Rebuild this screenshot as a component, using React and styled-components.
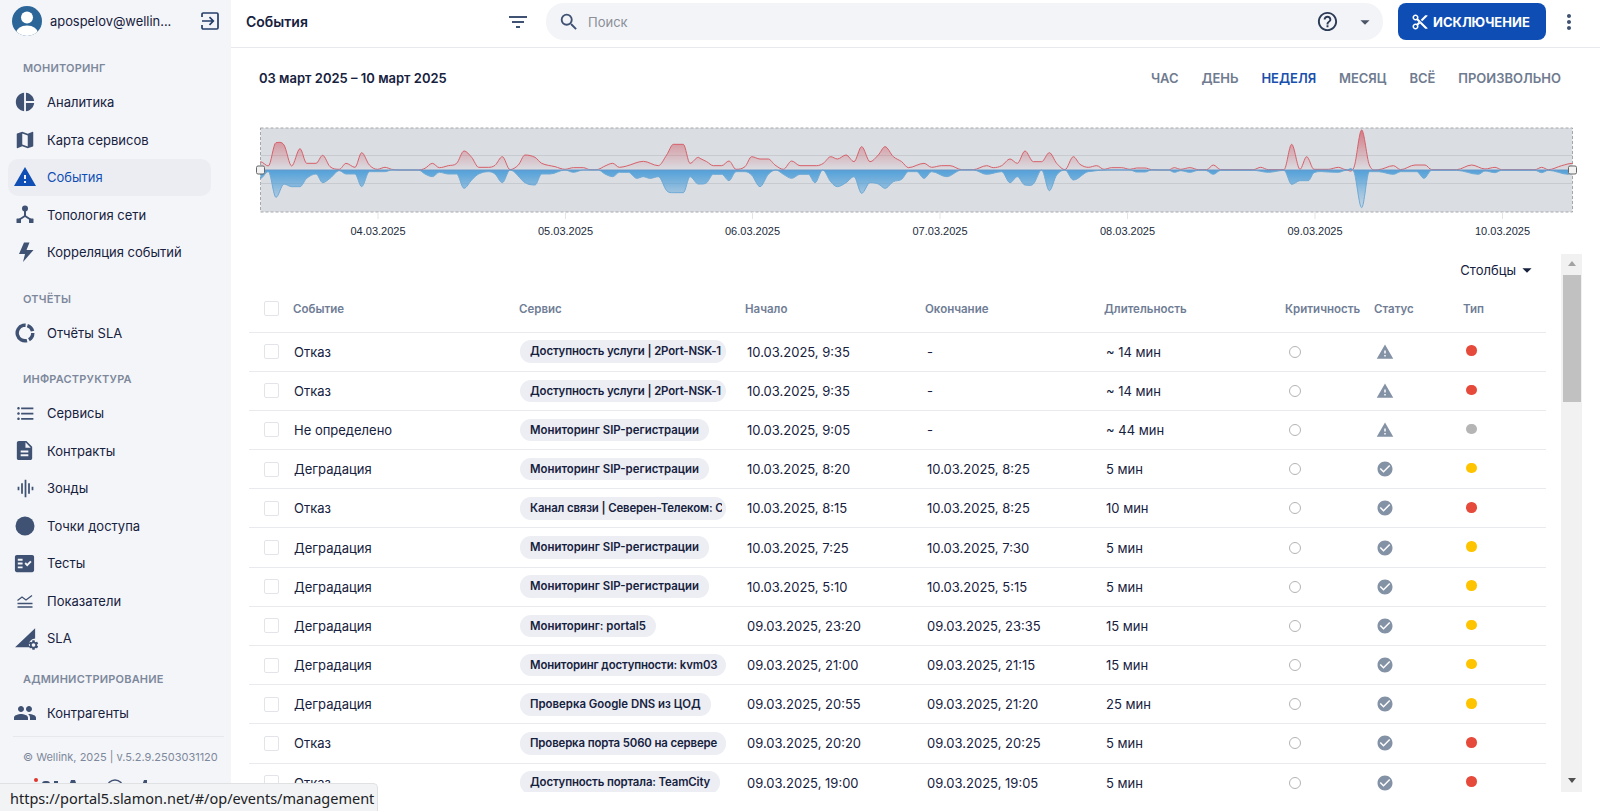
import React from 'react'
import styled, { createGlobalStyle } from 'styled-components'
import {
  MdPieChart, MdMap, MdWarning, MdFormatListBulleted, MdDescription, MdGraphicEq,
  MdFactCheck, MdPeople, MdSearch, MdHelpOutline, MdArrowDropDown, MdContentCut, MdMoreVert,
  MdFilterList, MdCheckCircle, MdSettings,
} from 'react-icons/md'

const Global = createGlobalStyle`
  html, body { margin: 0; height: 100%; overflow: hidden; background: #fff; }
  body { font-family: Inter, "Noto Sans", sans-serif; color: #16213e; }
`

const Page = styled.div`
  display: flex;
  height: 811px;
  width: 1600px;
`

/* sidebar */
const Sidebar = styled.aside`
  width: 231px;
  flex: none;
  background: #f4f5f8;
  overflow: hidden;
  display: flex;
  flex-direction: column;
`
const UserRow = styled.div`
  height: 42px;
  display: flex;
  align-items: center;
  padding-left: 12px;
  gap: 8px;
  margin-bottom: 11px;
`
const UserName = styled.span`
  font-size: 12.9px;
  white-space: nowrap;
  width: 120px;
`
const LogoutBtn = styled.span`
  margin-left: 23px;
  display: flex;
`
const Section = styled.div`
  margin-bottom: ${(p) => p.$gap}px;
`
const SectionLabel = styled.div`
  height: 30.5px;
  line-height: 30.5px;
  padding-left: 23px;
  font-size: 11px;
  font-weight: 600;
  letter-spacing: 0.2px;
  color: #7d889c;
`
const NavItem = styled.div`
  height: 37.5px;
  margin: 0 20px 0 8px;
  padding-left: 7px;
  display: flex;
  align-items: center;
  font-size: 13px;
  border-radius: 10px;
  color: ${(p) => (p.$active ? '#0f4fb5' : '#16213e')};
  background: ${(p) => (p.$active ? '#ecedf2' : 'transparent')};
`
const NavIcon = styled.span`
  width: 32px;
  flex: none;
  display: flex;
  color: ${(p) => (p.$active ? '#0f4fb5' : '#3f5273')};
`
const Divider = styled.div`
  height: 1px;
  margin: 4px 7px 0 13px;
  background: #e6e8ec;
`
const Copyright = styled.div`
  font-size: 11px;
  color: #7d889c;
  margin: 13px 0 0 23px;
  white-space: nowrap;
`
const Logos = styled.div`
  display: flex;
  margin: 14px 0 0 34px;
`
const StatusBar = styled.div`
  position: fixed;
  left: 0;
  bottom: 0;
  width: 378px;
  height: 28px;
  line-height: 28px;
  box-sizing: border-box;
  padding-left: 10px;
  background: #f1f3f4;
  border-top: 1px solid #dfe1e3;
  border-right: 1px solid #dfe1e3;
  border-top-right-radius: 5px;
  font-family: "Noto Sans", sans-serif;
  font-size: 14.5px;
  color: #202124;
  white-space: nowrap;
`

/* top bar */
const Main = styled.main`
  flex: 1;
  min-width: 0;
  display: flex;
  flex-direction: column;
`
const TopBar = styled.header`
  height: 43px;
  flex: none;
  padding: 0 8px 4px 15px;
  border-bottom: 1px solid #e8e9ec;
  display: flex;
  align-items: center;
`
const PageTitle = styled.div`
  width: 254px;
  font-size: 14px;
  font-weight: 600;
`
const IconBtn = styled.span`
  display: flex;
  align-items: center;
  justify-content: center;
  flex: none;
  width: ${(p) => p.$w || 36}px;
  color: #3f5273;
`
const SearchBox = styled.div`
  flex: 1;
  height: 37px;
  margin-left: 10px;
  border-radius: 18px;
  background: #f3f4f7;
  display: flex;
  align-items: center;
  padding-left: 12px;
  color: #3f5273;
`
const SearchText = styled.span`
  flex: 1;
  margin-left: 8px;
  font-size: 13px;
  color: #8a8f98;
`
const HelpIcon = styled.span`
  display: flex;
  color: #2b3a55;
  margin-right: 15px;
`
const CaretIcon = styled.span`
  display: flex;
  color: #4a5568;
  margin-right: 7px;
`
const ExcludeButton = styled.button`
  width: 148px;
  height: 37px;
  margin-left: 15px;
  flex: none;
  border: none;
  border-radius: 8px;
  background: #0e4db3;
  color: #fff;
  font-family: inherit;
  font-size: 13px;
  font-weight: 700;
  display: flex;
  align-items: center;
  padding: 0 0 0 13px;
  gap: 4px;
`

/* range + tabs */
const RangeBar = styled.div`
  height: 60px;
  flex: none;
  display: flex;
  align-items: center;
  justify-content: space-between;
  padding: 0 39px 0 28px;
`
const RangeText = styled.div`
  font-size: 13px;
  font-weight: 600;
`
const Tabs = styled.div`
  display: flex;
  gap: 22.8px;
`
const Tab = styled.span`
  font-size: 13px;
  font-weight: 600;
  color: ${(p) => (p.$active ? '#1a50ad' : '#6f7b8f')};
`
const ChartSvg = styled.svg`
  display: block;
  flex: none;
  margin-top: 12px;
`

/* table */
const TableWrap = styled.div`
  display: flex;
  height: 538px;
  flex: none;
  padding: 0 18px;
  overflow: hidden;
`
const TableArea = styled.div`
  flex: none;
  width: 1297px;
  overflow: hidden;
`
const ColumnsBar = styled.div`
  height: 32px;
  display: flex;
  align-items: center;
  justify-content: flex-end;
  padding-right: 11px;
  font-size: 13px;
`
const Row = styled.div`
  display: grid;
  grid-template-columns: 38px 225px 226px 177px 180px 183px 89px 90px 89px;
  align-items: center;
  height: ${(p) => (p.$head ? '46.5px' : '39.2px')};
  box-sizing: border-box;
  border-bottom: 1.5px solid #e9eaee;
  font-size: 13px;
`
const HeadCell = styled.div`
  padding-left: ${(p) => p.$pad}px;
  font-size: 11.5px;
  font-weight: 600;
  color: #6f7d95;
  white-space: nowrap;
`
const Cell = styled.div`
  padding-left: ${(p) => p.$pad}px;
  white-space: nowrap;
  display: flex;
  align-items: center;
`
const Checkbox = styled.span`
  width: 15px;
  height: 15px;
  margin-left: 15px;
  box-sizing: border-box;
  border: 1.5px solid #e2e4ea;
  border-radius: 2px;
  display: block;
`
const Pill = styled.span`
  display: inline-block;
  box-sizing: border-box;
  max-width: 206px;
  height: 22.5px;
  line-height: 22.5px;
  padding: 0 ${(p) => (p.$cut ? 4 : 10)}px 0 10px;
  border-radius: 11px;
  background: #eceef3;
  font-size: 11.4px;
  font-weight: 600;
  letter-spacing: ${(p) => (p.$tight ? '-0.13px' : '0')};
  overflow: hidden;
  white-space: nowrap;
`
const PillInner = styled.span`
  display: block;
  width: ${(p) => (p.$cut ? '192px' : 'auto')};
  overflow: ${(p) => (p.$cut ? 'hidden' : 'visible')};
`
const Ring = styled.span`
  width: 12px;
  height: 12px;
  box-sizing: border-box;
  border: 1.7px solid #b4b4b4;
  border-radius: 50%;
`
const Dot = styled.span`
  width: 10.5px;
  height: 10.5px;
  border-radius: 50%;
  margin-top: -2px;
  background: ${(p) => p.$color};
`
const StatusIcon = styled.span`
  display: flex;
  color: #8492a6;
`
const ScrollTrack = styled.div`
  width: 21px;
  margin-left: 15px;
  flex: none;
  background: #f1f1f1;
  display: flex;
  flex-direction: column;
  align-items: center;
`
const ArrowUp = styled.span`
  width: 0;
  height: 0;
  margin: 7px 0 6px;
  border: 4.5px solid transparent;
  border-top: none;
  border-bottom: 5px solid #a3a3a3;
`
const Thumb = styled.div`
  width: 18px;
  height: 127px;
  margin-top: 3px;
  background: #c1c1c1;
`
const ArrowDown = styled.span`
  width: 0;
  height: 0;
  margin: auto 0 9px;
  border: 4.5px solid transparent;
  border-bottom: none;
  border-top: 5px solid #505050;
`

const Avatar = () => (
  <svg width="30" height="30" viewBox="0 0 30 30">
    <defs><clipPath id="av"><circle cx="15" cy="15" r="15" /></clipPath></defs>
    <g clipPath="url(#av)">
      <rect width="30" height="30" fill="#2c6698" />
      <circle cx="15" cy="11.5" r="6" fill="#fff" />
      <ellipse cx="15" cy="27" rx="11" ry="7.5" fill="#fff" />
    </g>
  </svg>
)
const LogoutIcon = () => (
  <svg width="18" height="18" viewBox="0 0 18 18" fill="none" stroke="#24406b" strokeWidth="1.7">
    <path d="M1 5V2.2C1 1.5 1.5 1 2.2 1h13.6c.7 0 1.2.5 1.2 1.2v13.6c0 .7-.5 1.2-1.2 1.2H2.2C1.5 17 1 16.500 1 15.800V13" />
    <path d="M1 9h11M8.500 5.200 12.300 9l-3.800 3.800" />
  </svg>
)
const HubIcon = () => (
  <svg width="20" height="20" viewBox="0 0 20 20" fill="#3f5273">
    <circle cx="10" cy="3.500" r="3" />
    <path d="M9 5h2v5.500l5 3.200-1 1.600L10 12l-5 3.300-1-1.600 5-3.200z" />
    <rect x="1.500" y="13.500" width="4.500" height="4.500" rx=".6" />
    <rect x="14" y="13.500" width="4.500" height="4.500" rx=".6" />
  </svg>
)
const BoltIcon = () => (
  <svg width="20" height="20" viewBox="0 0 20 20" fill="#3f5273">
    <path d="M9 .5h5.500L11.500 8H18.500L8 20l2-8H4z" />
  </svg>
)
const RingIcon = () => (
  <svg width="20" height="20" viewBox="0 0 20 20" fill="none">
    <circle cx="10" cy="10" r="7.800" stroke="#3f5273" strokeWidth="3.400" strokeDasharray="27 1.800 8 1.800 8 2.400" transform="rotate(75 10 10)" />
  </svg>
)
const SolidCircle = () => (
  <svg width="20" height="20" viewBox="0 0 20 20"><circle cx="10" cy="10" r="9.500" fill="#3f5273" /></svg>
)
const WavesIcon = () => (
  <svg width="20" height="20" viewBox="0 0 20 20" fill="none" stroke="#3f5273" strokeWidth="1.300">
    <path d="M2.500 9.500 7 6l4 3 6-4.500M2.500 12.500h15M2.500 16h15" />
  </svg>
)
const SlaIcon = () => (
  <svg width="26" height="26" viewBox="0 0 24 24" style={{ marginLeft: -1 }}>
    <path d="M1 20.500 19.500 3v9.500a6 6 0 0 0-5.500 8z" fill="#3f5273" />
    <MdSettings x="12.500" y="13" size="11" color="#3f5273" />
  </svg>
)
// partner logos, only their top edge shows above the browser status bar
const PartnerLogos = () => (
  <svg width="130" height="14" viewBox="0 0 130 14" fill="#3f5273">
    <circle cx="2" cy="2" r="2" fill="#e0352b" />
    <rect x="8" y="3" width="8" height="8" rx="3" />
    <rect x="20" y="3" width="4" height="8" />
    <path d="M37 2h4l3 9h-10z" />
    <circle cx="81" cy="10" r="8" fill="none" stroke="#3f5273" strokeWidth="1.500" />
    <path d="M110 2h3v10h-3l-3 1v-3z" />
  </svg>
)

const navGroups = [
  { label: 'МОНИТОРИНГ', gap: 12.5, items: [
    ['Аналитика', <MdPieChart size={22} style={{ marginLeft: -1 }} />],
    ['Карта сервисов', <MdMap size={22} style={{ marginLeft: -1 }} />],
    ['События', <MdWarning size={24} style={{ marginLeft: -2 }} />, true],
    ['Топология сети', <HubIcon />],
    ['Корреляция событий', <BoltIcon />],
  ] },
  { label: 'ОТЧЁТЫ', gap: 12.5, items: [['Отчёты SLA', <RingIcon />]] },
  { label: 'ИНФРАСТРУКТУРА', gap: 7, items: [
    ['Сервисы', <MdFormatListBulleted size={21} />],
    ['Контракты', <MdDescription size={23} style={{ marginLeft: -2 }} />],
    ['Зонды', <MdGraphicEq size={21} />],
    ['Точки доступа', <SolidCircle />],
    ['Тесты', <MdFactCheck size={23} style={{ marginLeft: -2 }} />],
    ['Показатели', <WavesIcon />],
    ['SLA', <SlaIcon />],
  ] },
  { label: 'АДМИНИСТРИРОВАНИЕ', gap: 0, items: [['Контрагенты', <MdPeople size={24} style={{ marginLeft: -2 }} />]] },
]

// chart points read off the picture: [x, height] per segment, x in 3x crop pixels
const redSeg = [
  [240, [61,25,85,12,108,82,132,75,155,12,180,64,200,20,228,20,248,44,270,10,298,2,318,20,345,8,365,52,388,15,412,2,435,8,455,2,480,0,535,0,555,5,577,20,598,7,625,13,650,20,672,57,695,38,716,8,745,8,765,14,787,40,810,1,835,15,855,45,885,38,905,20,945,10,975,2,1000,7,1030,7,1050,1,1075,2,1095,12,1118,20,1138,8,1160,12,1210,26,1255,13,1280,45,1300,77,1330,77,1350,20,1375,38]],
  [700, [0,35,20,25,40,13,65,13,87,27,108,2,135,10,155,40,180,33,205,33,225,15,250,2,275,27,300,13,350,13,370,20,392,40,412,33,438,45,462,25,485,70,510,25,535,45,555,70,580,40,605,25,625,7,672,20,695,8,725,13,750,13,785,1,820,1,860,13,880,7,905,13,930,33,952,20,975,57,1000,25,1025,25,1048,52,1070,20,1095,1,1120,40,1140,17,1165,8,1190,13,1212,2,1235,7,1265,7,1290,2,1310,6,1335,6,1355,1]],
  [1140, [85,0,103,7,122,2,150,7,175,1,200,1,220,15,242,1,340,1,362,8,385,1,432,1,455,77,480,2,500,40,522,2,565,2,595,8,618,1,642,8,665,120,688,15,715,1,760,13,782,1,825,15,855,15,875,1,950,1,995,15,1035,3,1065,8,1085,1,1185,1,1205,8,1225,1,1265,13,1298,20]],
]
const blueSeg = [
  [240, [61,25,85,5,108,82,132,42,155,50,180,50,200,25,228,12,248,38,270,25,298,2,318,12,345,12,365,50,388,5,435,5,455,0,535,0,555,12,577,20,598,7,625,12,650,12,672,55,695,30,716,12,745,5,765,12,787,38,810,0,855,38,885,45,905,12,930,12,975,0,1000,7,1030,0,1075,0,1095,12,1118,20,1138,7,1165,7,1190,25,1210,20,1230,25,1255,20,1280,62,1300,68,1330,68,1350,20,1375,42]],
  [700, [0,42,20,38,40,13,65,13,87,32,108,5,135,5,155,15,180,50,205,13,228,0,250,13,275,25,300,13,325,13,345,38,368,0,392,35,412,50,438,38,462,20,485,70,510,38,535,42,555,55,580,35,605,28,625,5,650,5,672,25,695,5,740,20,785,0,820,0,860,13,905,5,930,38,952,20,975,45,1000,42,1025,0,1048,62,1070,15,1095,0,1120,30,1165,5,1290,0,1310,6,1335,6,1355,0]],
  [1140, [85,0,103,7,122,2,150,7,175,1,200,2,220,13,242,1,340,1,385,7,432,1,455,43,480,32,505,32,522,8,565,6,595,7,618,1,642,6,665,113,688,5,715,5,760,13,782,5,830,5,852,25,875,1,950,1,1015,13,1035,3,1065,8,1085,1,1185,1,1205,8,1225,1,1285,13,1298,1]],
]
const MID = 170
const toPoints = (segs, dir) => segs.flatMap(([off, a]) => {
  const out = []
  for (let i = 0; i < a.length; i += 2) out.push([off + a[i] / 3, MID + (dir * a[i + 1]) / 3])
  return out
})
const curve = (pts) => {
  const m = pts.map((p, i) => {
    if (i === 0 || i === pts.length - 1) return 0
    const a = pts[i - 1], b = pts[i + 1]
    if ((p[1] - a[1]) * (b[1] - p[1]) <= 0) return 0
    return (b[1] - a[1]) / (b[0] - a[0])
  })
  let d = `M${pts[0][0]} ${pts[0][1]}`
  for (let i = 1; i < pts.length; i++) {
    const dx = (pts[i][0] - pts[i - 1][0]) / 3
    d += `C${pts[i - 1][0] + dx} ${pts[i - 1][1] + m[i - 1] * dx} ${pts[i][0] - dx} ${pts[i][1] - m[i] * dx} ${pts[i][0]} ${pts[i][1]}`
  }
  return d
}
const redPts = toPoints(redSeg, -1)
const bluePts = toPoints(blueSeg, 1)
const LEFT = 260.5
const RIGHT = 1572.5
const area = (pts) => `${curve(pts)}L${pts[pts.length - 1][0]} ${MID}L${pts[0][0]} ${MID}Z`
const ticks = [
  [378, '04.03.2025'], [565.5, '05.03.2025'], [752.5, '06.03.2025'], [940, '07.03.2025'],
  [1127.5, '08.03.2025'], [1315, '09.03.2025'], [1502.5, '10.03.2025'],
]

const Timeline = () => (
  <ChartSvg width="1369" height="134" viewBox="231 120 1369 134">
    <defs>
      <linearGradient id="redFill" gradientUnits="userSpaceOnUse" x1="0" y1="128" x2="0" y2="170">
        <stop offset="0" stopColor="#cf4a55" stopOpacity=".7" />
        <stop offset="1" stopColor="#cf4a55" stopOpacity="0" />
      </linearGradient>
      <linearGradient id="blueFill" gradientUnits="userSpaceOnUse" x1="0" y1="170" x2="0" y2="212">
        <stop offset="0" stopColor="#3f98d8" stopOpacity=".88" />
        <stop offset=".5" stopColor="#3f98d8" stopOpacity=".42" />
        <stop offset="1" stopColor="#3f98d8" stopOpacity=".05" />
      </linearGradient>
    </defs>
    <rect x={LEFT} y="128" width={RIGHT - LEFT} height="84" fill="#dadde2" stroke="#a5a7ab" strokeDasharray="3 2" />
    <path d={`M${LEFT} 155.500H${RIGHT}M${LEFT} 183.500H${RIGHT}`} stroke="#c7cacf" strokeWidth="1.200" />
    <path d={area(redPts)} fill="url(#redFill)" />
    <path d={area(bluePts)} fill="url(#blueFill)" />
    <path d={curve(redPts)} fill="none" stroke="#d6616b" strokeWidth="1" />
    <path d={curve(bluePts)} fill="none" stroke="#6eaad6" strokeWidth="1" />
    <path d={`M${LEFT} ${MID}H${RIGHT}`} stroke="#6d98c8" strokeWidth="1.200" />
    <rect x={LEFT - 4} y={MID - 4} width="8" height="8" rx="1.500" fill="#f2f2f2" stroke="#666" />
    <rect x={RIGHT - 4} y={MID - 4} width="8" height="8" rx="1.500" fill="#f2f2f2" stroke="#666" />
    {ticks.map(([x, t]) => (
      <g key={t}>
        <path d={`M${x} 212v7`} stroke="#e2e4e8" />
        <text x={x} y="235" textAnchor="middle" fontFamily="'Liberation Sans', sans-serif" fontSize="11" fill="#222b3c">{t}</text>
      </g>
    ))}
  </ChartSvg>
)

const columns = [
  ['Событие', 6], ['Сервис', 7], ['Начало', 7], ['Окончание', 10], ['Длительность', 9],
  ['Критичность', 7], ['Статус', 7], ['Тип', 6],
]
const RED = '#e64a3a'
const YELLOW = '#ffc400'
const GRAY = '#b5b5b5'
const SIP = 'Мониторинг SIP-регистрации'
const events = [
  ['Отказ', 'Доступность услуги | 2Port-NSK-1', '10.03.2025, 9:35', '-', '~ 14 мин', 'warn', RED],
  ['Отказ', 'Доступность услуги | 2Port-NSK-1', '10.03.2025, 9:35', '-', '~ 14 мин', 'warn', RED],
  ['Не определено', SIP, '10.03.2025, 9:05', '-', '~ 44 мин', 'warn', GRAY],
  ['Деградация', SIP, '10.03.2025, 8:20', '10.03.2025, 8:25', '5 мин', 'ok', YELLOW],
  ['Отказ', 'Канал связи | Северен-Телеком: С', '10.03.2025, 8:15', '10.03.2025, 8:25', '10 мин', 'ok', RED],
  ['Деградация', SIP, '10.03.2025, 7:25', '10.03.2025, 7:30', '5 мин', 'ok', YELLOW],
  ['Деградация', SIP, '10.03.2025, 5:10', '10.03.2025, 5:15', '5 мин', 'ok', YELLOW],
  ['Деградация', 'Мониторинг: portal5', '09.03.2025, 23:20', '09.03.2025, 23:35', '15 мин', 'ok', YELLOW],
  ['Деградация', 'Мониторинг доступности: kvm03', '09.03.2025, 21:00', '09.03.2025, 21:15', '15 мин', 'ok', YELLOW],
  ['Деградация', 'Проверка Google DNS из ЦОД', '09.03.2025, 20:55', '09.03.2025, 21:20', '25 мин', 'ok', YELLOW],
  ['Отказ', 'Проверка порта 5060 на сервере', '09.03.2025, 20:20', '09.03.2025, 20:25', '5 мин', 'ok', RED],
  ['Отказ', 'Доступность портала: TeamCity', '09.03.2025, 19:00', '09.03.2025, 19:05', '5 мин', 'ok', RED],
]

export default function App() {
  return (
    <Page>
      <Global />
      <Sidebar>
        <UserRow>
          <Avatar />
          <UserName>apospelov@wellin...</UserName>
          <LogoutBtn><LogoutIcon /></LogoutBtn>
        </UserRow>
        {navGroups.map((g) => (
          <Section key={g.label} $gap={g.gap}>
            <SectionLabel>{g.label}</SectionLabel>
            {g.items.map(([name, icon, active]) => (
              <NavItem key={name} $active={active}>
                <NavIcon $active={active}>{icon}</NavIcon>
                {name}
              </NavItem>
            ))}
          </Section>
        ))}
        <Divider />
        <Copyright>© Wellink, 2025 | v.5.2.9.2503031120</Copyright>
        <Logos><PartnerLogos /></Logos>
      </Sidebar>
      <Main>
        <TopBar>
          <PageTitle>События</PageTitle>
          <IconBtn><MdFilterList size={24} /></IconBtn>
          <SearchBox>
            <MdSearch size={22} />
            <SearchText>Поиск</SearchText>
            <HelpIcon><MdHelpOutline size={23} /></HelpIcon>
            <CaretIcon><MdArrowDropDown size={22} /></CaretIcon>
          </SearchBox>
          <ExcludeButton><MdContentCut size={18} />ИСКЛЮЧЕНИЕ</ExcludeButton>
          <IconBtn $w={46}><MdMoreVert size={24} /></IconBtn>
        </TopBar>
        <RangeBar>
          <RangeText>03 март 2025 – 10 март 2025</RangeText>
          <Tabs>
            <Tab>ЧАС</Tab>
            <Tab>ДЕНЬ</Tab>
            <Tab $active>НЕДЕЛЯ</Tab>
            <Tab>МЕСЯЦ</Tab>
            <Tab>ВСЁ</Tab>
            <Tab>ПРОИЗВОЛЬНО</Tab>
          </Tabs>
        </RangeBar>
        <Timeline />
        <TableWrap>
          <TableArea>
            <ColumnsBar>Столбцы<MdArrowDropDown size={22} style={{ margin: '0 -3px 0 0' }} /></ColumnsBar>
            <Row $head>
              <Checkbox />
              {columns.map(([name, pad]) => <HeadCell key={name} $pad={pad}>{name}</HeadCell>)}
            </Row>
            {events.map((e, i) => {
              const cut = e[1].length > 31
              const tight = e[1].length >= 29
              return (
                <Row key={i}>
                  <Checkbox />
                  <Cell $pad={7}>{e[0]}</Cell>
                  <Cell $pad={8}><Pill $cut={cut} $tight={tight}><PillInner $cut={cut}>{e[1]}</PillInner></Pill></Cell>
                  <Cell $pad={9}>{e[2]}</Cell>
                  <Cell $pad={12}>{e[3]}</Cell>
                  <Cell $pad={11}>{e[4]}</Cell>
                  <Cell $pad={11}><Ring /></Cell>
                  <Cell $pad={9}>
                    <StatusIcon>{e[5] === 'warn' ? <MdWarning size={18} /> : <MdCheckCircle size={18} />}</StatusIcon>
                  </Cell>
                  <Cell $pad={9}><Dot $color={e[6]} /></Cell>
                </Row>
              )
            })}
          </TableArea>
          <ScrollTrack>
            <ArrowUp />
            <Thumb />
            <ArrowDown />
          </ScrollTrack>
        </TableWrap>
      </Main>
      <StatusBar>https://portal5.slamon.net/#/op/events/management</StatusBar>
    </Page>
  )
}
